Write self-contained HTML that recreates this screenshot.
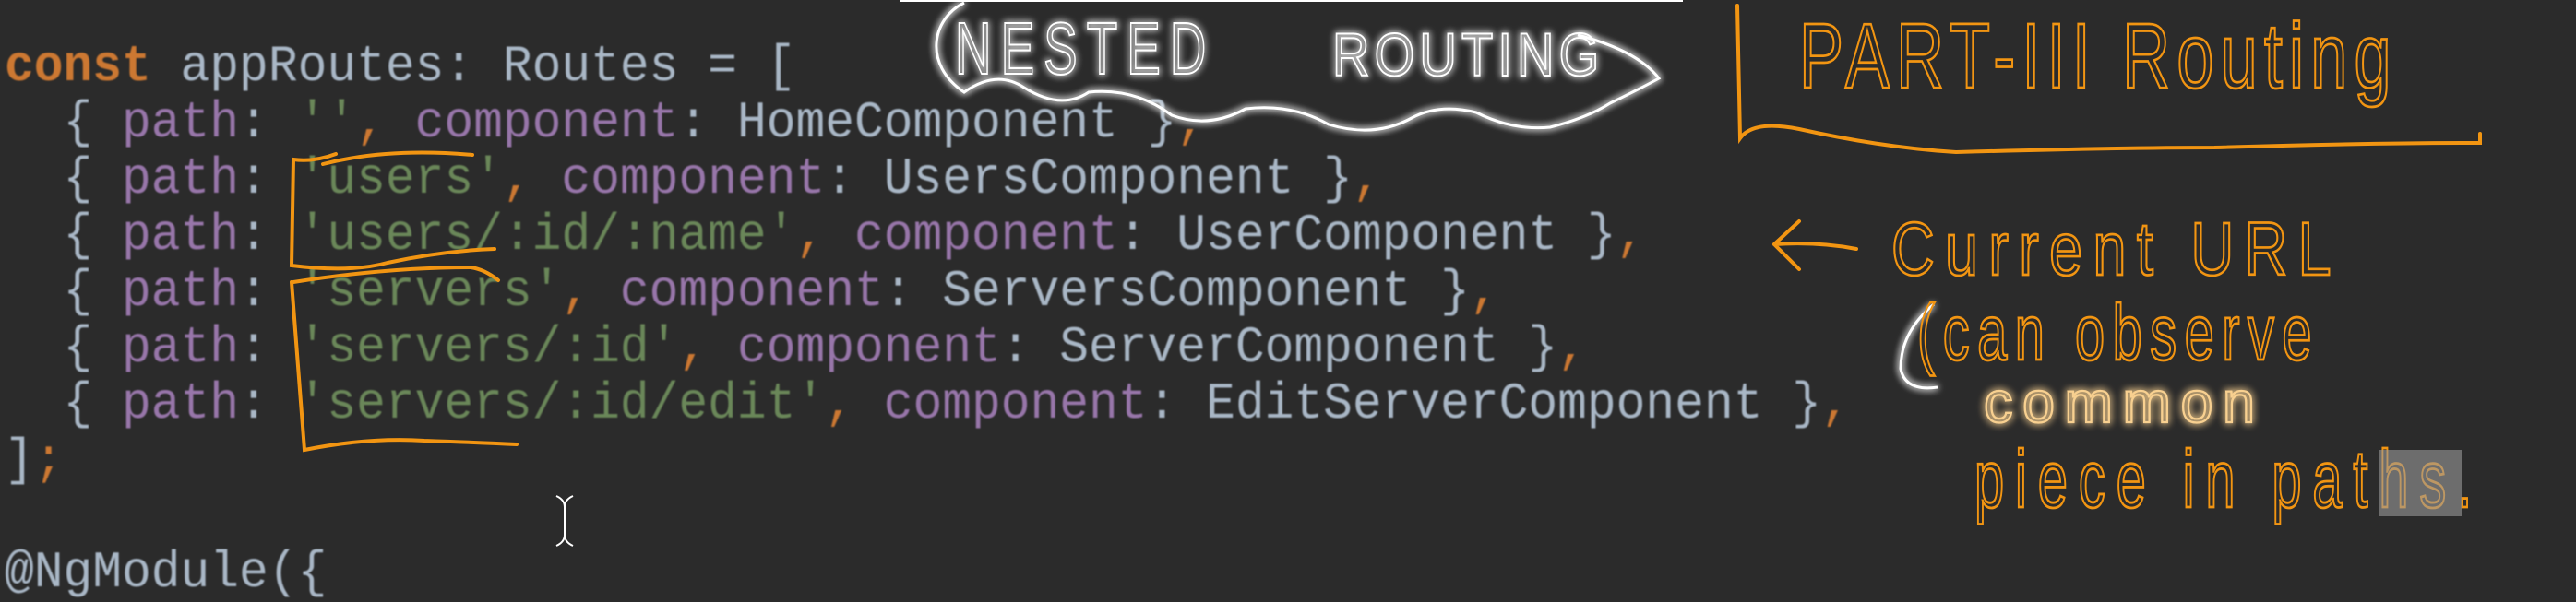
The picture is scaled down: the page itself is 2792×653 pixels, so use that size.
<!DOCTYPE html>
<html><head><meta charset="utf-8"><style>
html,body{margin:0;padding:0;}
body{width:2792px;height:620px;background:#2b2b2b;overflow:hidden;position:relative;font-family:"Liberation Mono",monospace;}
pre{position:absolute;left:5px;top:42px;margin:0;font-family:"Liberation Mono",monospace;font-size:56px;line-height:61px;color:#a9b7c6;filter:blur(0.8px);transform:scale(0.945,1);transform-origin:0 0;}
.k{color:#cc7832;font-weight:bold}.o{color:#cc7832}.p{color:#9876aa}.s{color:#6a8759}
svg{position:absolute;left:0;top:0}
.h{font-family:"Liberation Sans",sans-serif;fill:none;stroke:#f29512;stroke-width:2.2;}
</style></head><body>
<pre><span class="k">const</span> appRoutes: Routes = [
  { <span class="p">path</span>: <span class="s">''</span><span class="o">,</span> <span class="p">component</span>: HomeComponent }<span class="o">,</span>
  { <span class="p">path</span>: <span class="s">'users'</span><span class="o">,</span> <span class="p">component</span>: UsersComponent }<span class="o">,</span>
  { <span class="p">path</span>: <span class="s">'users/:id/:name'</span><span class="o">,</span> <span class="p">component</span>: UserComponent }<span class="o">,</span>
  { <span class="p">path</span>: <span class="s">'servers'</span><span class="o">,</span> <span class="p">component</span>: ServersComponent }<span class="o">,</span>
  { <span class="p">path</span>: <span class="s">'servers/:id'</span><span class="o">,</span> <span class="p">component</span>: ServerComponent }<span class="o">,</span>
  { <span class="p">path</span>: <span class="s">'servers/:id/edit'</span><span class="o">,</span> <span class="p">component</span>: EditServerComponent }<span class="o">,</span>
]<span class="o">;</span>

@NgModule({</pre>
<svg width="2792" height="620" viewBox="0 0 2792 620">
<defs><filter id="g" x="-10%" y="-20%" width="120%" height="140%"><feGaussianBlur stdDeviation="4" result="b"/><feMerge><feMergeNode in="b"/><feMergeNode in="b"/><feMergeNode in="SourceGraphic"/></feMerge></filter></defs>
<rect x="976" y="0" width="848" height="2" fill="#fff"/>
<g fill="none" stroke="#f29512" stroke-width="4" stroke-linecap="round">
<path d="M364,167 Q340,176 318,173 L316,288 Q380,296 420,285 Q480,272 536,270"/>
<path d="M350,178 Q420,160 512,168"/>
<path d="M318,306 Q420,290 510,290 Q525,292 540,304"/>
<path d="M316,306 L330,488 Q400,474 460,478 Q520,480 560,482"/>
<path d="M1883,6 L1886,150 Q1900,130 1950,140 Q2040,160 2120,165 Q2300,160 2400,160 Q2560,155 2688,155 L2688,145"/>
<path d="M1923,265 L1950,240 M1923,265 L1950,292 M1923,265 Q1970,262 2012,270"/>
</g>
<g filter="url(#g)" fill="none" stroke="#fff" stroke-width="3">
<path d="M1045,3 C1010,20 1000,70 1045,100 Q1080,75 1110,95 Q1150,120 1180,100 Q1230,95 1270,125 Q1310,140 1350,118 Q1400,112 1440,135 Q1490,150 1530,128 Q1560,112 1600,122 Q1640,142 1680,138 Q1720,128 1745,112 Q1780,95 1798,85 Q1775,55 1710,38"/>
<path d="M2096,330 Q2060,360 2060,400 Q2065,425 2100,420"/>
</g>
<g filter="url(#g)" fill="none" stroke="#fff" stroke-width="2" font-family="Liberation Sans,sans-serif">
<text transform="translate(1035,80) scale(0.72,1.05)" font-size="76" letter-spacing="14">NESTED</text>
<text transform="translate(1444,82) scale(0.85,1)" font-size="66" letter-spacing="6">ROUTING</text>
</g>
<text class="h" transform="translate(1950,95) scale(0.9,1.25)" font-size="80" letter-spacing="8">PART-III  Routing</text>
<text class="h" transform="translate(2050,298) scale(0.95,1.2)" font-size="68" letter-spacing="12">Current URL</text>
<text class="h" transform="translate(2078,390) scale(0.85,1.25)" font-size="68" letter-spacing="10">(can observe</text>
<text class="h" transform="translate(2150,458) scale(1.05,1.05)" font-size="60" letter-spacing="10" filter="url(#g)" style="stroke:#f8d090">common</text>
<text class="h" transform="translate(2140,550) scale(0.85,1.3)" font-size="68" letter-spacing="14">piece in paths.</text>
<rect x="2578" y="488" width="90" height="72" fill="#999" opacity="0.6"/>
<g stroke="#fff" stroke-width="2" fill="none"><path d="M603,538 Q612,542 612,550 Q612,542 621,538 M612,550 L612,580 M603,592 Q612,588 612,580 Q612,588 621,592"/></g>
</svg>
</body></html>
